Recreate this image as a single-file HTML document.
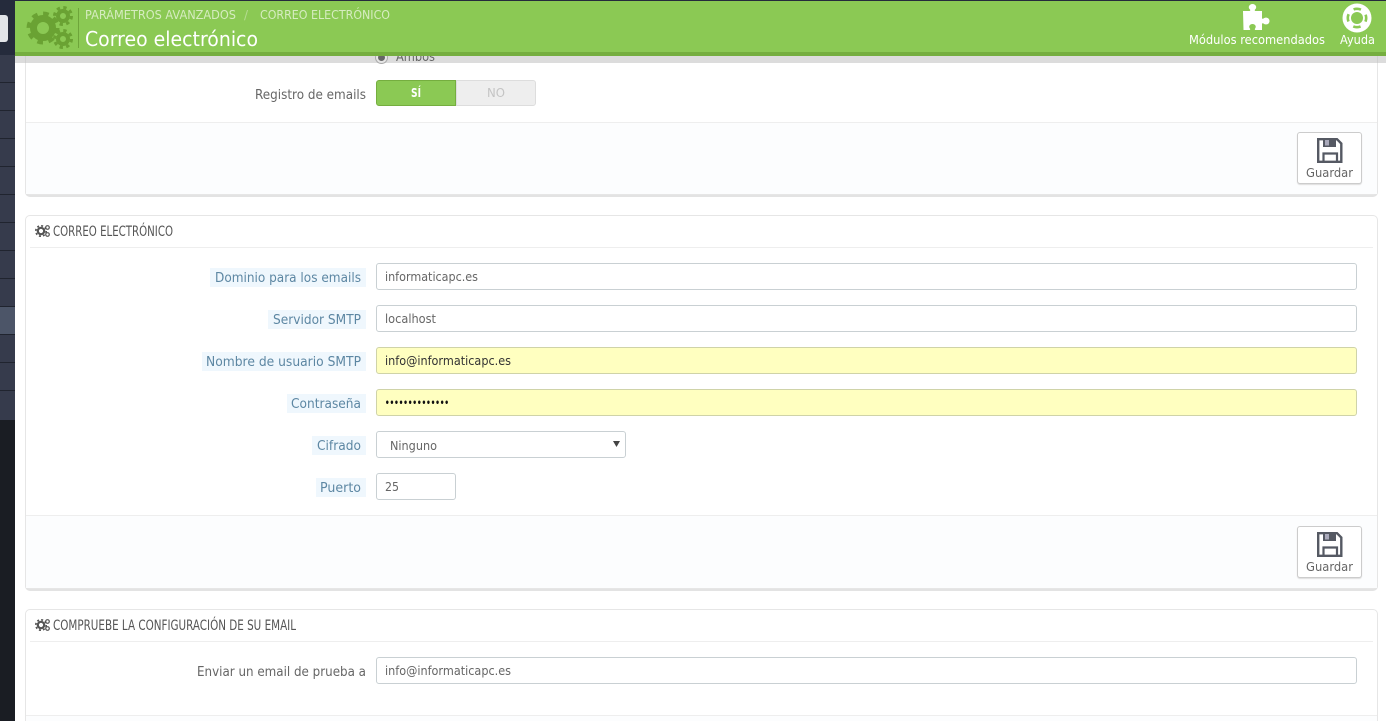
<!DOCTYPE html>
<html lang="es"><head><meta charset="utf-8"><title>Correo electrónico</title>
<style>
html,body{margin:0;padding:0;width:1386px;height:721px;overflow:hidden;background:#fff}
#p{position:relative;width:1386px;height:721px;overflow:hidden;background:#fff}
#p div{position:absolute;box-sizing:border-box}
.row{left:0;width:15px;height:28px;background:#363b4c;border-bottom:1px solid #20242f}
.panel{left:25px;width:1353px;background:#fff;border:1px solid #e6e6e6;border-radius:5px;box-shadow:0 2px 0 #e3e3e3}
.foot{left:26px;width:1351px;background:#fcfdfe;border-top:1px solid #eee}
.hl{left:30px;width:1343px;height:1px;background:#eee}
.lb{background:#eff7fd;height:19px}
.in{left:376px;height:27px;background:#fff;border:1px solid #c9d0d3;border-radius:3px}
.in.y{background:#ffffc0;border-color:#cfd3a8;width:981px}
.w{width:981px}
.btn{left:1297px;width:65px;height:52px;background:#fff;border:1px solid #ccc;border-radius:3px;box-shadow:0 1px 1px #ddd}
svg{position:absolute;left:0;top:0}
text{font-family:"DejaVu Sans","Liberation Sans",sans-serif}
.c{font-family:"DejaVu Sans Condensed","Liberation Sans",sans-serif;font-size:14.5px;fill:#555}
.l{font-size:13px;fill:#5d87a3}
.t{font-size:12px;fill:#666}
</style></head><body><div id="p">

<div style="left:0;top:0;width:15px;height:721px;background:#1a1d23"></div>
<div style="left:0;top:0;width:15px;height:56px;background:#252b3c"></div>
<div style="left:0;top:15px;width:8px;height:27px;background:#e2e4e9;border-radius:0 3px 3px 0"></div>
<div class="row" style="top:55px"></div><div class="row" style="top:83px"></div>
<div class="row" style="top:111px"></div><div class="row" style="top:139px"></div>
<div class="row" style="top:167px"></div><div class="row" style="top:195px"></div>
<div class="row" style="top:223px"></div><div class="row" style="top:251px"></div>
<div class="row" style="top:279px"></div>
<div class="row" style="top:307px;background:#4c5568"></div>
<div class="row" style="top:335px"></div><div class="row" style="top:363px"></div>
<div class="row" style="top:391px;height:29px;border-bottom:0"></div>

<!-- panel 1 -->
<div class="panel" style="top:20px;height:175px"></div>
<div class="foot" style="top:122px;height:72px"></div>
<div style="left:15px;top:53px;width:1371px;height:10px;background:#dcdcdc"></div>
<div style="left:25px;top:53px;width:1px;height:10px;background:#d0d0d0"></div>
<div style="left:1377px;top:53px;width:1px;height:10px;background:#d0d0d0"></div>
<div style="left:376px;top:80px;width:80px;height:26px;background:#8bc954;border:1px solid #75ae3f;border-radius:3px 0 0 3px"></div>
<div style="left:456px;top:80px;width:80px;height:26px;background:#eee;border:1px solid #ddd;border-radius:0 3px 3px 0"></div>
<div class="btn" style="top:132px"></div>

<!-- panel 2 -->
<div class="panel" style="top:215px;height:374px"></div>
<div class="hl" style="top:247px"></div>
<div class="foot" style="top:515px;height:73px"></div>
<div class="lb" style="left:210px;top:268px;width:156px"></div>
<div class="lb" style="left:268px;top:310px;width:98px"></div>
<div class="lb" style="left:202px;top:352px;width:164px"></div>
<div class="lb" style="left:287px;top:394px;width:79px"></div>
<div class="lb" style="left:312px;top:436px;width:54px"></div>
<div class="lb" style="left:316px;top:478px;width:50px"></div>
<div class="in w" style="top:263px"></div>
<div class="in w" style="top:305px"></div>
<div class="in y" style="top:347px"></div>
<div class="in y" style="top:389px"></div>
<div class="in" style="top:431px;width:250px"></div>
<div class="in" style="top:473px;width:80px"></div>
<div class="btn" style="top:526px"></div>

<!-- panel 3 -->
<div class="panel" style="top:609px;height:130px"></div>
<div class="hl" style="top:641px"></div>
<div class="in w" style="top:657px"></div>
<div class="foot" style="top:715px;height:10px"></div>

<svg width="1386" height="721" viewBox="0 0 1386 721">
<defs>
<g id="sv">
<path fill="none" stroke="#555963" stroke-width="2.400" d="M1318.200 139.200h18.800l4.300 4.300v18.300h-23.100z"/>
<rect x="1323" y="139" width="13" height="8" fill="#555963"/>
<rect x="1325" y="140" width="4" height="5.500" fill="#aab"/>
<path fill="none" stroke="#555963" stroke-width="2.200" d="M1323.500 161.500v-8h13.500v8"/>
</g>
<g id="sg">
<circle cx="41" cy="231" r="3.200" fill="none" stroke="#555" stroke-width="2.200"/>
<circle cx="41" cy="231" r="5.200" fill="none" stroke="#555" stroke-width="1.700" stroke-dasharray="2 2.080"/>
<circle cx="47.500" cy="227.500" r="1.800" fill="none" stroke="#555" stroke-width="1.200"/>
<circle cx="47.500" cy="234.500" r="1.800" fill="none" stroke="#555" stroke-width="1.200"/>
</g>
</defs>

<!-- radio + Ambos, tucked under header -->
<circle cx="381.500" cy="57.500" r="6" fill="#e6e6e6" stroke="#aaa"/>
<circle cx="381.500" cy="57.500" r="3.500" fill="#666"/>
<text x="396" y="61" textLength="39" lengthAdjust="spacingAndGlyphs" font-size="13" fill="#666">Ambos</text>

<!-- header -->
<rect x="15" y="0" width="1371" height="53" fill="#8bc954"/>
<rect x="15" y="0" width="1371" height="1" fill="#252b3c"/>
<rect x="15" y="52" width="1371" height="4" fill="#75ae3f"/>
<rect x="78" y="8" width="1" height="40" fill="#6ea53a"/>
<g fill="none" stroke="#6aa233">
<circle cx="43" cy="28" r="9.500" stroke-width="7"/>
<circle cx="43" cy="28" r="14.500" stroke-width="4" stroke-dasharray="5.700 5.690"/>
<circle cx="63" cy="16" r="5" stroke-width="4"/>
<circle cx="63" cy="16" r="8.500" stroke-width="3" stroke-dasharray="3.340 3.340"/>
<circle cx="63" cy="39" r="5" stroke-width="4"/>
<circle cx="63" cy="39" r="8.500" stroke-width="3" stroke-dasharray="3.340 3.340"/>
</g>
<text x="85" y="19" textLength="151" lengthAdjust="spacingAndGlyphs" font-size="12" fill="#d6ecc0">PARÁMETROS AVANZADOS</text>
<text x="244" y="19" font-size="12" fill="#b5dc91">/</text>
<text x="260" y="19" textLength="130" lengthAdjust="spacingAndGlyphs" font-size="12" fill="#d6ecc0">CORREO ELECTRÓNICO</text>
<text x="85" y="46" textLength="173" lengthAdjust="spacingAndGlyphs" font-size="20" fill="#fff">Correo electrónico</text>

<path fill="#fff" d="M1243 11h6.500c.8 0 1-.8.500-1.500-2.500-2-.8-5.500 2.500-5.500s5 3.500 2.500 5.500c-.5.7-.3 1.500.5 1.500h6.500v7c0 .8.800 1 1.500.5 2-1.800 6-1 6 2.500s-4 4.300-6 2.500c-.7-.5-1.500-.3-1.500.5v6h-6.500c-.8 0-.9-.8-.4-1.500 1.500-1.800.4-4.500-2.600-4.500s-4.100 2.700-2.600 4.500c.5.700.4 1.500-.4 1.500h-6z"/>
<text x="1189" y="44" textLength="136" lengthAdjust="spacingAndGlyphs" font-size="12.500" fill="#fff">Módulos recomendados</text>

<circle cx="1357" cy="18" r="14.500" fill="#fff"/>
<circle cx="1357" cy="18" r="9.200" fill="none" stroke="#8bc954" stroke-width="2.600" stroke-dasharray="7.500 6.950" stroke-dashoffset="3.750"/>
<circle cx="1357" cy="18" r="6" fill="#8bc954"/>
<text x="1340" y="44" textLength="35" lengthAdjust="spacingAndGlyphs" font-size="12.500" fill="#fff">Ayuda</text>

<!-- panel 1 text -->
<text x="255" y="99" textLength="111" lengthAdjust="spacingAndGlyphs" font-size="13" fill="#666">Registro de emails</text>
<text x="411" y="97" textLength="10" lengthAdjust="spacingAndGlyphs" font-size="12" font-weight="bold" fill="#fff">SÍ</text>
<text x="487" y="97" textLength="18" lengthAdjust="spacingAndGlyphs" font-size="12" fill="#c4c4c4">NO</text>
<use href="#sv"/>
<text x="1306" y="177" textLength="47" lengthAdjust="spacingAndGlyphs" font-size="12.500" fill="#666">Guardar</text>

<!-- panel 2 text -->
<use href="#sg"/>
<text class="c" x="53" y="236" textLength="120" lengthAdjust="spacingAndGlyphs">CORREO ELECTRÓNICO</text>
<text class="l" x="215" y="282" textLength="146" lengthAdjust="spacingAndGlyphs">Dominio para los emails</text>
<text class="l" x="273" y="324" textLength="88" lengthAdjust="spacingAndGlyphs">Servidor SMTP</text>
<text class="l" x="206" y="366" textLength="155" lengthAdjust="spacingAndGlyphs">Nombre de usuario SMTP</text>
<text class="l" x="291" y="408" textLength="70" lengthAdjust="spacingAndGlyphs">Contraseña</text>
<text class="l" x="317" y="450" textLength="44" lengthAdjust="spacingAndGlyphs">Cifrado</text>
<text class="l" x="320" y="492" textLength="41" lengthAdjust="spacingAndGlyphs">Puerto</text>
<text class="t" x="385" y="281" textLength="93" lengthAdjust="spacingAndGlyphs">informaticapc.es</text>
<text class="t" x="385" y="323" textLength="51" lengthAdjust="spacingAndGlyphs">localhost</text>
<text class="t" x="385" y="365" textLength="126" lengthAdjust="spacingAndGlyphs" style="fill:#333">info@informaticapc.es</text>
<text class="t" x="385" y="406" textLength="64" lengthAdjust="spacingAndGlyphs" style="fill:#111;font-size:10px;font-weight:bold">••••••••••••••</text>
<text class="t" x="390" y="450" textLength="47" lengthAdjust="spacingAndGlyphs">Ninguno</text>
<path d="M613 441h7l-3.500 6z" fill="#444"/>
<text class="t" x="385" y="491" textLength="14" lengthAdjust="spacingAndGlyphs">25</text>
<use href="#sv" y="394"/>
<text x="1306" y="571" textLength="47" lengthAdjust="spacingAndGlyphs" font-size="12.500" fill="#666">Guardar</text>

<!-- panel 3 text -->
<use href="#sg" y="394"/>
<text class="c" x="53" y="630" textLength="243" lengthAdjust="spacingAndGlyphs">COMPRUEBE LA CONFIGURACIÓN DE SU EMAIL</text>
<text x="197" y="676" textLength="169" lengthAdjust="spacingAndGlyphs" font-size="13" fill="#666">Enviar un email de prueba a</text>
<text class="t" x="385" y="675" textLength="126" lengthAdjust="spacingAndGlyphs">info@informaticapc.es</text>
</svg>
</div></body></html>
